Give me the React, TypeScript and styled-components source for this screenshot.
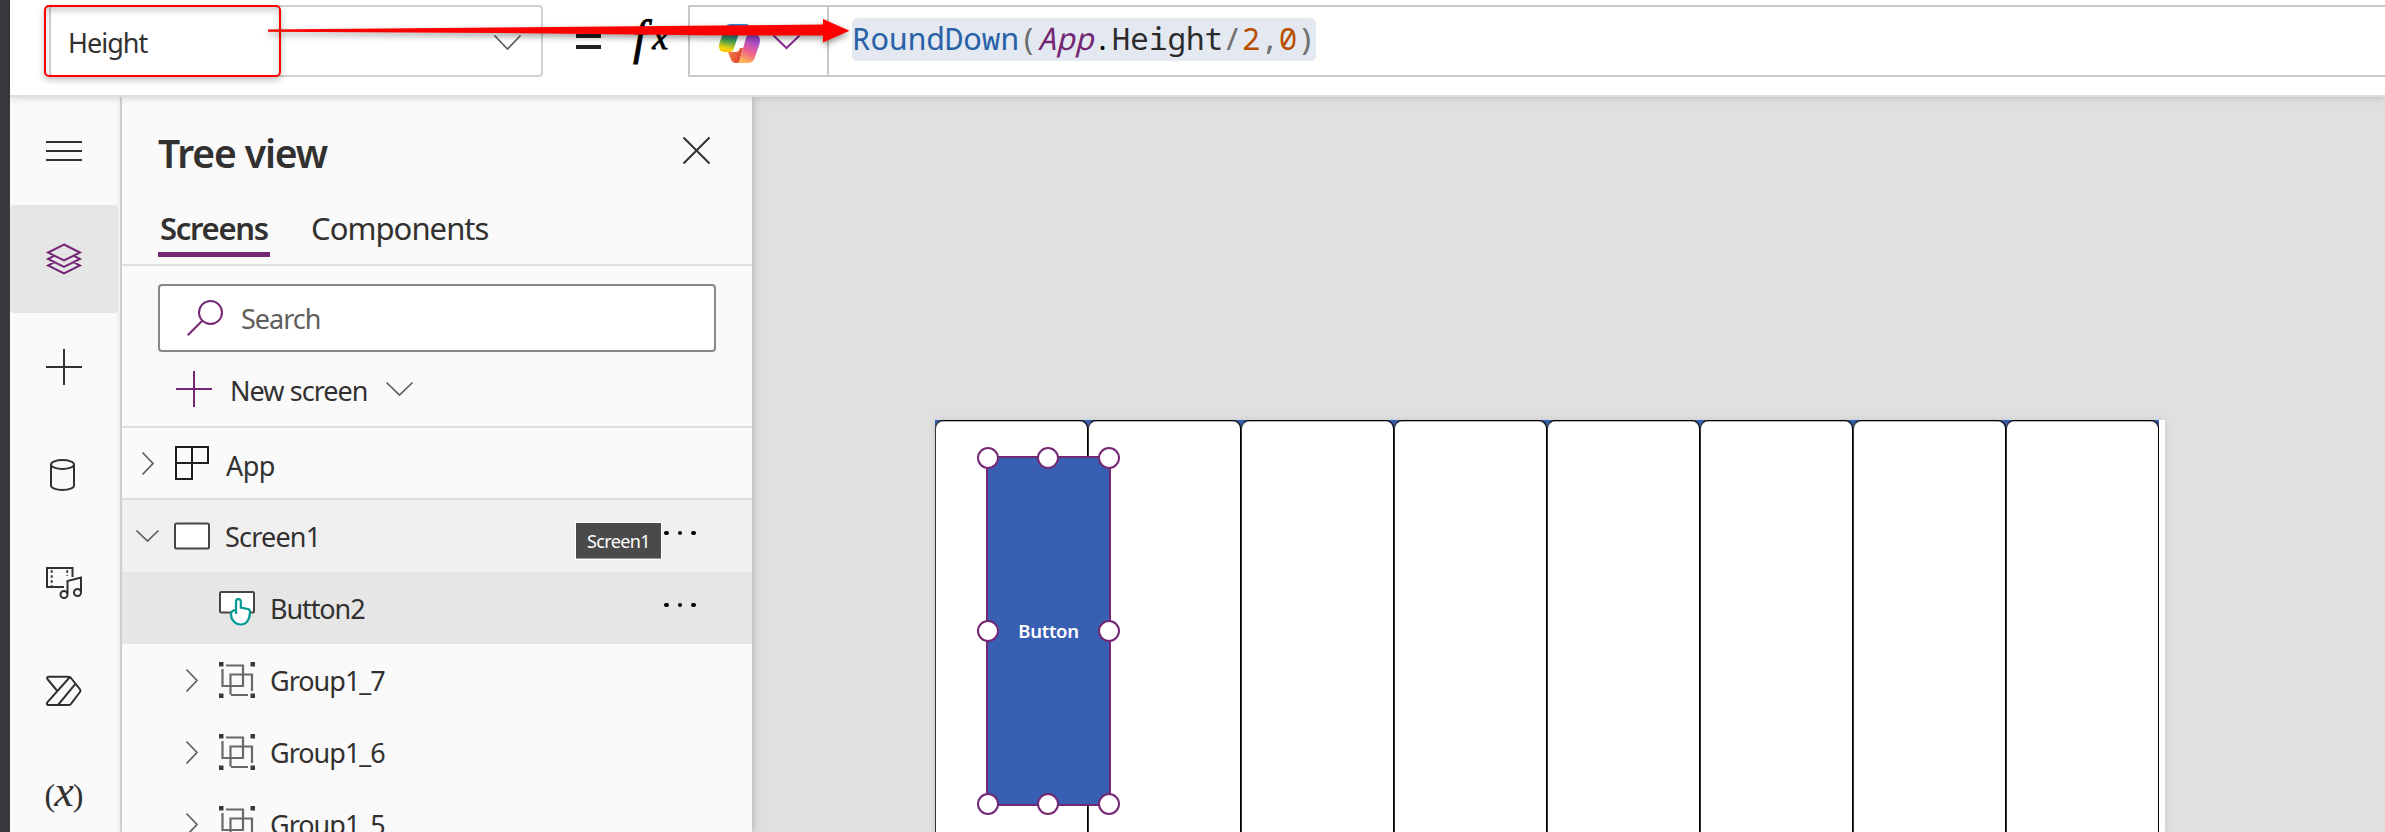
import React from 'react';
import styled, { createGlobalStyle } from 'styled-components';

const purple = '#742774';
const ink = '#323130';

const GlobalStyle = createGlobalStyle`
  *, *::before, *::after { box-sizing: border-box; }
  body { margin: 0; font-family: 'Noto Sans', 'Open Sans', sans-serif; color: ${ink}; background: #fff; }
  svg { display: block; flex: none; fill: none; overflow: visible; }
`;

const Studio = styled.div`
  position: relative;
  display: flex;
  width: 2385px;
  height: 832px;
  overflow: hidden;
`;

const WindowEdge = styled.div`
  width: 10px;
  flex: none;
  background: #38383d;
`;

const Workspace = styled.div`
  flex: 1;
  min-width: 0;
  display: flex;
  flex-direction: column;
`;

const TopBar = styled.header`
  position: relative;
  z-index: 2;
  flex: none;
  display: flex;
  height: 97px;
  padding: 5px 0 18px 39px;
  background: #fff;
  border-bottom: 2px solid #dedede;
  box-shadow: 0 2px 6px rgba(0, 0, 0, 0.13);
`;

const Label = styled.span<{ $size?: number; $track?: number; $weight?: number; $color?: string }>`
  font-size: ${(p) => p.$size ?? 27}px;
  letter-spacing: ${(p) => p.$track ?? 0}px;
  font-weight: ${(p) => p.$weight ?? 400};
  color: ${(p) => p.$color ?? ink};
  line-height: 1.3;
  white-space: nowrap;
`;

const PropertyPicker = styled.div`
  width: 494px;
  height: 72px;
  display: flex;
  align-items: center;
  justify-content: space-between;
  padding: 3px 20px 0 17px;
  border: 2px solid #d0d0d0;
  border-radius: 4px;
`;

const EqualsSign = styled.div`
  width: 25px;
  height: 15px;
  margin: 29px 0 0 33px;
  border-top: 4px solid #201f1e;
  border-bottom: 4px solid #201f1e;
`;

const FunctionMark = styled.div`
  display: flex;
  align-items: flex-start;
  width: 60px;
  margin-left: 27px;
  height: 72px;
  padding-left: 5px;
  font-family: 'Liberation Serif', serif;
  font-style: italic;
  color: #000;
  -webkit-text-stroke: 0.8px #000;
`;

const FunctionF = styled.span`
  font-size: 48px;
  line-height: 66px;
`;

const FunctionX = styled.span`
  margin-left: 6px;
  font-size: 36px;
  line-height: 65px;
`;

const FormulaBar = styled.div`
  flex: 1;
  display: flex;
  height: 72px;
  border: 2px solid #c8c8c8;
  border-right: 0;
  background: #fffffd;
`;

const CopilotCell = styled.div`
  width: 139px;
  display: flex;
  align-items: flex-start;
  gap: 13px;
  padding: 17px 0 0 29px;
  border-right: 2px solid #c8c8c8;
  svg + svg { margin-top: 11px; }
`;

const Formula = styled.code`
  height: 43px;
  margin: 11px 0 0 23px;
  padding-bottom: 3px;
  border-radius: 5px;
  background: #e4e9f1;
  font-family: 'Noto Sans Mono', 'DejaVu Sans Mono', monospace;
  font-size: 30.93px;
  line-height: 40px;
  color: #2b2b2b;
  white-space: nowrap;
`;

const Token = styled.span<{ $c: string; $i?: boolean }>`
  color: ${(p) => p.$c};
  font-style: ${(p) => (p.$i ? 'italic' : 'normal')};
`;

const Body = styled.div`
  flex: 1;
  min-height: 0;
  display: flex;
`;

const Rail = styled.nav`
  width: 112px;
  flex: none;
  background: #fafafa;
  border-right: 2px solid #dedede;
`;

const RailItem = styled.div<{ $on?: boolean }>`
  width: 108px;
  height: 108px;
  display: flex;
  align-items: center;
  justify-content: center;
  border-radius: 4px;
  background: ${(p) => (p.$on ? '#e6e6e6' : 'transparent')};
`;

const VariableMark = styled.span`
  display: flex;
  align-items: baseline;
  font-family: 'Liberation Serif', serif;
  font-size: 32px;
  line-height: 40px;
  margin-top: -11px;
  color: ${ink};
  i { font-size: 44px; line-height: 40px; margin: 0 -1px; }
`;

const Panel = styled.aside`
  position: relative;
  z-index: 1;
  width: 630px;
  flex: none;
  background: #fafafa;
  box-shadow: 1px 0 8px rgba(0, 0, 0, 0.22);
`;

const PanelHead = styled.div`
  display: flex;
  justify-content: space-between;
  height: 107px;
  padding: 31px 42px 0 36px;
  svg { margin-top: 9px; }
`;

const Tabs = styled.div`
  display: flex;
  gap: 39px;
  height: 62px;
  padding: 0 36px;
  border-bottom: 2px solid #dedede;
`;

const Tab = styled.div<{ $on?: boolean; $w: number }>`
  display: flex;
  flex-direction: column;
  justify-content: flex-start;
  width: ${(p) => p.$w}px;
  height: 53px;
  padding: 4px 0 0 2px;
  box-shadow: ${(p) => (p.$on ? `inset 0 -5px 0 ${purple}` : 'none')};
`;

const SearchBox = styled.div`
  display: flex;
  align-items: center;
  gap: 18px;
  width: 558px;
  height: 68px;
  margin: 18px 0 0 36px;
  padding-left: 27px;
  border: 2px solid #8a8886;
  border-radius: 4px;
  background: #fff;
  span { margin-top: 1px; }
`;

const NewScreen = styled.div`
  display: flex;
  align-items: center;
  height: 76px;
  padding-left: 54px;
  border-bottom: 2px solid #dedede;
  span { margin: 3px 18px 0 18px; }
`;

const TreeRow = styled.div<{ $bg?: string; $indent: number; $line?: boolean }>`
  display: flex;
  align-items: center;
  height: 72px;
  padding-left: ${(p) => p.$indent}px;
  background: ${(p) => p.$bg ?? 'transparent'};
  border-bottom: ${(p) => (p.$line ? '2px solid #dedede' : '0')};
  span { margin-top: ${(p) => (p.$line ? 5 : 2)}px; }
`;

const Twist = styled.div`
  width: 24px;
  display: flex;
  justify-content: center;
  margin-right: 15px;
`;

const IconSlot = styled.div`
  width: 36px;
  margin-right: 15px;
`;

const MoreDots = styled.div`
  display: flex;
  gap: 9px;
  margin: -6px 56px 0 auto;
  i { width: 4.6px; height: 4.6px; border-radius: 50%; background: #000; }
`;

const Tooltip = styled.div`
  position: absolute;
  left: 453px;
  top: 425px;
  width: 87px;
  height: 38px;
  display: flex;
  align-items: center;
  justify-content: center;
  padding-top: 2px;
  background: #4a4a4a;
  border: 1px solid #fff;
  box-shadow: inset 0 -1px 0 #999;
`;

const Canvas = styled.main`
  flex: 1;
  min-width: 0;
  padding: 323px 0 0 183px;
  background: #e0e0e0;
`;

const Artboard = styled.div`
  position: relative;
  width: 1230px;
  height: 412px;
  background: #fff;
  box-shadow: 0 0 6px rgba(0, 0, 0, 0.12);
`;

const Columns = styled.div`
  display: flex;
  width: 1224px;
  height: 600px;
  clip-path: inset(0 0 188px 0);
  background: #3860b2;
`;

const Column = styled.div`
  flex: none;
  width: 153px;
  border: 1px solid #000;
  border-left-color: #333;
  border-radius: 8px;
  background: #fff;
  box-shadow: inset 0 0.6px 0 rgba(0, 0, 0, 0.6);
`;

const SelectedButton = styled.div`
  position: absolute;
  left: 51px;
  top: 36px;
  width: 125px;
  height: 350px;
  display: flex;
  align-items: center;
  justify-content: center;
  background: #3860b2;
  border: 2px solid ${purple};
`;

const Handle = styled.i<{ $x: number; $y: number }>`
  position: absolute;
  left: ${(p) => p.$x}%;
  top: ${(p) => p.$y}%;
  width: 22px;
  height: 22px;
  margin: -11px 0 0 -11.5px;
  border: 2px solid ${purple};
  border-radius: 50%;
  background: #fff;
`;

const RedFrame = styled.div`
  position: absolute;
  z-index: 4;
  left: 44px;
  top: 5px;
  width: 237px;
  height: 72px;
  border: 2px solid #f00;
  border-radius: 5px;
  box-shadow: 0 3px 6px rgba(0, 0, 0, 0.25), inset 0 4px 6px rgba(0, 0, 0, 0.18);
`;

const ArrowLayer = styled.svg`
  position: absolute;
  z-index: 5;
  left: 0;
  top: 0;
  filter: drop-shadow(0 3px 3px rgba(0, 0, 0, 0.4));
`;

type ChevProps = { w: number; h: number; d?: 'down' | 'right'; c?: string; sw?: number };
const Chevron = ({ w, h, d = 'down', c = '#605e5c', sw = 1.7 }: ChevProps) => (
  <svg width={w} height={h} stroke={c} strokeWidth={sw}>
    <path d={d === 'down' ? `M.5 .5L${w / 2} ${h - 1}L${w - 0.5} .5` : `M.5 .5L${w - 1} ${h / 2}L.5 ${h - 0.5}`} />
  </svg>
);

const CopilotLogo = () => (
  <svg width="41" height="39" viewBox="0 0 41 39">
    <defs>
      <linearGradient id="cl" x1="0.6" y1="0" x2="0.35" y2="1">
        <stop offset="0" stopColor="#2a8fd8" />
        <stop offset="0.4" stopColor="#1f7f8c" />
        <stop offset="0.65" stopColor="#4fa84c" />
        <stop offset="0.9" stopColor="#e8cf10" />
        <stop offset="1" stopColor="#ffc800" />
      </linearGradient>
      <linearGradient id="cr" x1="0.85" y1="0" x2="0.5" y2="1">
        <stop offset="0" stopColor="#8a48d8" />
        <stop offset="0.3" stopColor="#b050c8" />
        <stop offset="0.65" stopColor="#f0608c" />
        <stop offset="1" stopColor="#ffb357" />
      </linearGradient>
      <linearGradient id="co" x1="0" y1="0" x2="1" y2="0.6">
        <stop offset="0" stopColor="#ff8a4c" />
        <stop offset="1" stopColor="#d8402c" />
      </linearGradient>
    </defs>
    <path fill="url(#co)" d="M9 28h7c3 0 4-1 5-4l3 0-4 15h-3c-4 0-5-3-8-11z" />
    <path fill="url(#cl)" d="M11 0h16c3 0 4 3 5 8h-7c-3 0-5 1-6 4l-4 12c-1 3-2 4-5 4H5c-4 0-6-4-4.500-9L5 6c1-4 3-6 6-6z" />
    <path fill="url(#cr)" d="M31 10h4c5 0 7 4 5.500 10L36 33c-1 4-4 6-7 6H17c2 0 3-1 4-4l6-21c1-3 2-4 4-4z" />
  </svg>
);

const line = { stroke: ink, strokeWidth: 2 };

const LayersIcon = () => (
  <svg width="36" height="32" stroke={purple} strokeWidth="2">
    <path d="M18 1.500L34 9.500 18 17.500 2 9.500zM8 12.800L2 16l16 8 16-8-6-3.200M8 19.300l-6 3.200 16 8 16-8-6-3.200" />
  </svg>
);
const PlusIcon = ({ c = ink }: { c?: string }) => (
  <svg width="36" height="36" stroke={c} strokeWidth="2"><path d="M18 0v36M0 18h36" /></svg>
);
const DataIcon = () => (
  <svg width="36" height="32" {...line}>
    <ellipse cx="16.500" cy="5.500" rx="11.500" ry="4.500" />
    <path d="M5 5.500v21c0 2.500 5 4.500 11.500 4.500S28 29 28 26.500v-21" />
  </svg>
);
const MediaIcon = () => (
  <svg width="36" height="32" {...line}>
    <path d="M18 20H1V1h25.500v9" />
    <path strokeDasharray="2.500 2.500" d="M5.700 3.200V19M21.200 3.200V9" />
    <path d="M21.500 27V14L35 10.500V25" />
    <circle cx="18" cy="27.500" r="3.500" />
    <circle cx="31.500" cy="25.500" r="3.500" />
  </svg>
);
const FlowIcon = () => (
  <svg width="36" height="31" {...line} strokeLinejoin="round">
    <path d="M11.300 15L1.800 3.500C.5 2 1 .8 3 .8h19.500q1.500 0 2.500 1.200l9 11.300q1 1.400 0 2.700l-9 11.800q-1 1.200-2.500 1.200H2.500C.8 29 .5 27.500 1.500 26.200L23.500 1.500M12 29L29 8.300" />
  </svg>
);
const AppIcon = () => (
  <svg width="36" height="36" stroke="#201f1e" strokeWidth="2">
    <path d="M1 2h32v16H1zM17 2v32H1V2" />
  </svg>
);
const ScreenIcon = () => (
  <svg width="36" height="28" stroke="#484644" strokeWidth="2">
    <rect x="1" y="1.500" width="34" height="25" rx="1.500" fill="#fff" />
  </svg>
);
const ButtonIcon = () => (
  <svg width="36" height="32" strokeWidth="2">
    <rect x="1" y="0" width="34" height="20.500" rx="1.500" fill="#fff" stroke="#484644" />
    <path
      fill="#fff" stroke="#009b92" strokeWidth="2.200"
      d="M17 22V9.500a2.400 2.400 0 0 1 4.800 0v6.200l7 1.300c1.800.4 2.400 1.500 2.200 3.500-.4 5.500-2.500 12-9.500 12-5 0-9.500-4.500-9.500-10 0-3 2-4.500 5-4.300z"
    />
  </svg>
);
const GroupIcon = () => (
  <svg width="36" height="36" stroke="#6b6968" strokeWidth="2.200">
    <path d="M7 3.500h17v20.500H3.500V7M11.500 32.500V12.500H33V29M29 33H12" />
    <path fill="#3b3a39" stroke="none" d="M0 0h4.500v4.500H0zM31.500 0H36v4.500h-4.500zM0 31.500h4.500V36H0zM31.500 31.500H36V36h-4.500z" />
  </svg>
);

const More = () => <MoreDots><i /><i /><i /></MoreDots>;

const groups = ['Group1_7', 'Group1_6', 'Group1_5'];
const handles = [[0, 0], [50, 0], [100, 0], [0, 50], [100, 50], [0, 100], [50, 100], [100, 100]];

export default function App() {
  return (
    <Studio>
      <GlobalStyle />
      <WindowEdge />
      <Workspace>
        <TopBar>
          <PropertyPicker>
            <Label $track={-1}>Height</Label>
            <Chevron w={27} h={15} />
          </PropertyPicker>
          <EqualsSign />
          <FunctionMark><FunctionF>f</FunctionF><FunctionX>x</FunctionX></FunctionMark>
          <FormulaBar>
            <CopilotCell>
              <CopilotLogo />
              <Chevron w={27} h={14} c="#8a2f96" sw={2} />
            </CopilotCell>
            <Formula>
              <Token $c="#2a62a8">RoundDown</Token>
              <Token $c="#6e6e6e">(</Token>
              <Token $c={purple} $i>App</Token>
              <Token $c="#000">.</Token>
              Height
              <Token $c="#6e6e6e">/</Token>
              <Token $c="#b85000">2</Token>
              <Token $c="#6e6e6e">,</Token>
              <Token $c="#b85000">0</Token>
              <Token $c="#6e6e6e">)</Token>
            </Formula>
          </FormulaBar>
        </TopBar>
        <Body>
          <Rail>
            <RailItem>
              <svg width="36" height="20" {...line}><path d="M0 1h36M0 10h36M0 19h36" /></svg>
            </RailItem>
            <RailItem $on><LayersIcon /></RailItem>
            <RailItem><PlusIcon /></RailItem>
            <RailItem><DataIcon /></RailItem>
            <RailItem><MediaIcon /></RailItem>
            <RailItem><FlowIcon /></RailItem>
            <RailItem><VariableMark>(<i>x</i>)</VariableMark></RailItem>
          </Rail>
          <Panel>
            <PanelHead>
              <Label $size={39} $track={-1.1} $weight={600}>Tree view</Label>
              <svg width="27" height="27" stroke={ink} strokeWidth="2"><path d="M.5 .5l26 26M26.500 .5l-26 26" /></svg>
            </PanelHead>
            <Tabs>
              <Tab $on $w={112}><Label $size={31} $track={-1.3} $weight={600}>Screens</Label></Tab>
              <Tab $w={180}><Label $size={31} $track={-0.95}>Components</Label></Tab>
            </Tabs>
            <SearchBox>
              <svg width="36" height="36" stroke={purple} strokeWidth="2"><circle cx="23.500" cy="12.500" r="11.500" /><path d="M15.500 20.500L.7 35.300" /></svg>
              <Label $track={-1} $color="#605e5c">Search</Label>
            </SearchBox>
            <NewScreen>
              <PlusIcon c={purple} />
              <Label $track={-0.95}>New screen</Label>
              <Chevron w={27} h={14} />
            </NewScreen>
            <TreeRow $indent={14} $line>
              <Twist><Chevron w={12} h={23} d="right" /></Twist>
              <IconSlot><AppIcon /></IconSlot>
              <Label $track={-0.5}>App</Label>
            </TreeRow>
            <TreeRow $indent={13} $bg="#f0f0f0">
              <Twist><Chevron w={23} h={12} /></Twist>
              <IconSlot><ScreenIcon /></IconSlot>
              <Label $track={-0.8}>Screen1</Label>
              <More />
            </TreeRow>
            <TreeRow $indent={97} $bg="#e6e6e6">
              <IconSlot><ButtonIcon /></IconSlot>
              <Label $track={-1.1}>Button2</Label>
              <More />
            </TreeRow>
            {groups.map((name) => (
              <TreeRow key={name} $indent={58}>
                <Twist><Chevron w={12} h={23} d="right" /></Twist>
                <IconSlot><GroupIcon /></IconSlot>
                <Label $track={-1}>{name}</Label>
              </TreeRow>
            ))}
            <Tooltip><Label $size={18} $track={-0.6} $color="#fff">Screen1</Label></Tooltip>
          </Panel>
          <Canvas>
            <Artboard>
              <Columns>
                {Array.from({ length: 8 }, (_, i) => <Column key={i} />)}
              </Columns>
              <SelectedButton>
                <Label $size={18.500} $track={-0.3} $weight={600} $color="#fff">Button</Label>
                {handles.map(([x, y]) => <Handle key={`${x}-${y}`} $x={x} $y={y} />)}
              </SelectedButton>
            </Artboard>
          </Canvas>
        </Body>
      </Workspace>
      <RedFrame />
      <ArrowLayer width="860" height="60">
        <path fill="#f00" d="M268 29.500L500 27.500 823 24.500V19L849.500 30.800 823 42.500V35.500L700 35.300 500 33 268 31.800z" />
      </ArrowLayer>
    </Studio>
  );
}
